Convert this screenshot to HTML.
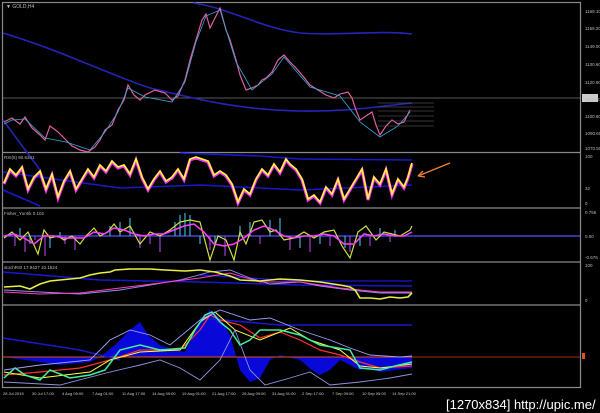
<!DOCTYPE html>
<html><head><meta charset="utf-8"><style>
html,body{margin:0;padding:0;background:#000;width:600px;height:413px;overflow:hidden}
svg{display:block}
text{font-family:"Liberation Sans",sans-serif}
</style></head><body>
<svg width="600" height="413" viewBox="0 0 600 413" xmlns="http://www.w3.org/2000/svg">
<rect width="600" height="413" fill="#000"/>
<!-- frame -->
<g stroke="#8a8a8a" stroke-width="1.2" fill="none">
<rect x="2.5" y="2.5" width="578" height="385"/>
<line x1="2" y1="152.5" x2="581" y2="152.5"/>
<line x1="2" y1="208" x2="581" y2="208"/>
<line x1="2" y1="262" x2="581" y2="262"/>
<line x1="2" y1="305" x2="581" y2="305"/>
</g>
<line x1="3" y1="98" x2="580" y2="98" stroke="#777" stroke-width="0.8"/>
<!-- main chart blue bands -->
<g fill="none" stroke="#2424b8" stroke-width="1.6">
<path d="M193,3 C230,8 260,28 300,33 C340,36 380,30 412,34"/>
<path d="M3,33 C60,50 110,75 150,88 C200,100 240,110 300,111 C350,112 380,106 412,103"/>
<path d="M3,120 L40,170"/>
</g>
<!-- candles approx line -->
<g fill="none" stroke-width="1.2">
<path d="M4,122 L12,118 L20,124 L25,117 L32,128 L40,135 L45,140 L50,126 L58,132 L66,140 L72,146 L80,150 L88,152 L95,147 L100,140 L105,130 L112,125 L118,110 L124,100 L128,85 L134,95 L140,100 L145,95 L155,90 L165,93 L172,100 L178,96 L185,80 L190,60 L196,40 L202,20 L206,14 L210,28 L214,20 L220,8 L226,30 L230,40 L236,60 L240,75 L246,90 L252,88 L258,85 L262,80 L266,78 L272,72 L278,60 L284,55 L290,62 L296,68 L302,75 L310,85 L318,90 L326,95 L334,98 L340,94 L348,92 L352,98 L356,110 L360,120 L366,116 L372,112 L376,125 L380,135 L386,126 L392,120 L398,124 L404,122 L410,110" stroke="#e060a0"/>
<path d="M4,124 L12,120 L25,119 L45,138 L66,142 L90,150 L105,132 L118,112 L128,88 L145,97 L172,102 L185,82 L196,42 L206,16 L220,10 L236,62 L252,90 L272,74 L284,57 L310,87 L340,96 L360,122 L380,137 L398,126 L410,112" stroke="#3aa6d8" stroke-width="0.8"/>
</g>
<g stroke="#666" stroke-width="0.6">
<line x1="378" y1="103" x2="434" y2="103"/><line x1="378" y1="107" x2="434" y2="107"/><line x1="378" y1="111" x2="434" y2="111"/><line x1="378" y1="116" x2="434" y2="116"/><line x1="378" y1="121" x2="434" y2="121"/><line x1="378" y1="126" x2="434" y2="126"/>
</g>
<rect x="582" y="94" width="16" height="8" fill="#ccc"/>
<g font-size="4.5" fill="#bbb">
<text x="585" y="13">1169.10</text><text x="585" y="30">1159.20</text><text x="585" y="48">1149.00</text><text x="585" y="66">1130.60</text><text x="585" y="84">1120.90</text><text x="585" y="101">1110.70</text><text x="585" y="118">1100.80</text><text x="585" y="135">1090.60</text><text x="585" y="150">1070.50</text>
<text x="585" y="158">100</text><text x="585" y="190">32</text><text x="585" y="205">0</text>
<text x="585" y="214">0.756</text><text x="585" y="238">0.00</text><text x="585" y="259">-0.676</text>
<text x="585" y="267">100</text><text x="585" y="302">0</text>
<text x="6" y="8" font-size="5">▼ GOLD,H4</text>
<text x="4" y="159">RSI(5) 90.6341</text>
<text x="4" y="215">Fisher_Yur4ik 0.102</text>
<text x="4" y="269">stochRSI 17.9427 10.1524</text>
</g>
<!-- RSI panel -->
<g fill="none">
<path d="M3,172 L120,188 L200,185 L300,190 L412,185" stroke="#1818d0" stroke-width="1.5"/>
<path d="M180,153 L260,156 L300,159 L412,160" stroke="#1818d0" stroke-width="1.5"/>
<path d="M3,190 L40,206" stroke="#1818d0" stroke-width="1.5"/>
<path d="M4,184 L10,170 L16,176 L22,168 L28,190 L34,178 L40,172 L46,190 L52,175 L58,198 L64,182 L70,172 L76,190 L82,180 L88,170 L94,178 L100,166 L106,172 L112,162 L118,168 L124,166 L130,175 L136,160 L142,178 L148,190 L154,180 L160,172 L166,182 L172,178 L178,170 L184,180 L190,160 L196,158 L202,160 L208,162 L214,176 L220,172 L226,176 L232,185 L238,203 L244,190 L250,195 L256,180 L262,170 L268,176 L274,165 L280,173 L286,160 L290,165 L296,170 L302,180 L308,200 L314,196 L320,203 L326,188 L332,195 L338,180 L344,200 L350,190 L356,180 L362,170 L368,200 L374,178 L380,185 L386,170 L392,195 L398,180 L404,188 L408,178 L412,164" stroke="#ff30ff" stroke-width="3"/>
<path d="M4,183 L10,169 L16,175 L22,167 L28,189 L34,177 L40,171 L46,189 L52,174 L58,197 L64,181 L70,171 L76,189 L82,179 L88,169 L94,177 L100,165 L106,171 L112,161 L118,167 L124,165 L130,174 L136,159 L142,177 L148,189 L154,179 L160,171 L166,181 L172,177 L178,169 L184,179 L190,159 L196,157 L202,159 L208,161 L214,175 L220,171 L226,175 L232,184 L238,202 L244,189 L250,194 L256,179 L262,169 L268,175 L274,164 L280,172 L286,159 L290,164 L296,169 L302,179 L308,199 L314,195 L320,202 L326,187 L332,194 L338,179 L344,199 L350,189 L356,179 L362,169 L368,199 L374,177 L380,184 L386,169 L392,194 L398,179 L404,187 L408,177 L412,163" stroke="#ffff30" stroke-width="1.6"/>
</g>
<line x1="418" y1="176" x2="450" y2="163" stroke="#f08030" stroke-width="1.3"/>
<path d="M418,176 l5,-5 M418,176 l7,1" stroke="#f08030" stroke-width="1.3"/>
<!-- Fisher -->
<line x1="3" y1="236" x2="580" y2="236" stroke="#5050ff" stroke-width="1.2"/>
<g stroke-width="1.2">
<path d="M20,236V228M30,236V244M50,236V248M60,236V232M110,236V226M120,236V222M130,236V218M175,236V222M180,236V215M185,236V213M190,236V215M200,236V244M215,236V246M240,236V226M250,236V222M270,236V220M280,236V218M300,236V248M320,236V244M345,236V248M360,236V246M380,236V228M395,236V230" stroke="#3ab0d8"/>
<path d="M15,236V246M25,236V252M35,236V240M45,236V256M65,236V244M75,236V250M140,236V248M150,236V244M160,236V252M210,236V250M225,236V256M260,236V244M290,236V250M310,236V252M330,236V246M350,236V252M370,236V246M390,236V242" stroke="#a040d0"/>
</g>
<g fill="none">
<path d="M4,238 L12,232 L20,240 L28,232 L38,254 L44,230 L50,238 L58,236 L64,240 L72,236 L80,244 L86,236 L94,228 L100,236 L108,232 L114,224 L120,232 L130,226 L140,244 L150,232 L160,236 L170,230 L180,222 L190,220 L200,222 L210,260 L218,236 L226,240 L234,260 L240,232 L246,244 L254,222 L262,220 L270,232 L276,230 L284,240 L294,238 L304,232 L314,238 L324,232 L334,230 L342,246 L350,258 L358,232 L366,226 L376,240 L384,232 L392,234 L400,236 L410,230 L412,226" stroke="#d0e040" stroke-width="1.2"/>
<path d="M4,236 L14,234 L24,238 L34,244 L44,236 L54,236 L64,238 L74,238 L84,238 L94,232 L104,234 L114,228 L124,230 L134,234 L144,236 L154,234 L164,234 L174,230 L184,226 L194,224 L204,232 L214,244 L224,246 L234,244 L244,238 L254,230 L264,226 L274,230 L284,236 L294,238 L304,236 L314,236 L324,234 L334,236 L344,244 L354,244 L364,234 L374,236 L384,234 L394,236 L404,236 L412,232" stroke="#ff40ff" stroke-width="1.5"/>
</g>
<!-- stochRSI -->
<g fill="none">
<path d="M3,272 L100,280 L200,282 L300,285 L412,286" stroke="#1818d0" stroke-width="1.5"/>
<path d="M200,275 L300,281 L412,281" stroke="#1818d0" stroke-width="1.3"/>
<path d="M4,290 L40,292 L80,294 L120,290 L150,285 L180,280 L210,272 L230,270 L250,278 L270,284 L300,282 L320,286 L350,290 L380,293 L412,293" stroke="#9090f0" stroke-width="0.9"/>
<path d="M4,292 L40,294 L80,293 L120,288 L160,283 L200,278 L230,273 L260,282 L300,282 L340,288 L380,292 L412,292" stroke="#ff40c0" stroke-width="1"/>
<path d="M4,287 L20,286 L30,289 L40,284 L50,281 L60,280 L70,279 L80,278 L90,275 L100,273 L110,272 L115,270 L130,269 L150,269 L165,270 L185,271 L200,270 L215,272 L230,276 L240,280 L260,281 L280,279 L300,280 L320,282 L340,285 L350,287 L355,290 L360,298 L370,298 L380,299 L390,297 L400,298 L408,297 L412,293" stroke="#e8f040" stroke-width="1.6"/>
</g>
<!-- bottom panel -->
<path d="M3,357 L100,357 L115,345 L130,330 L140,322 L148,335 L160,345 L175,350 L185,352 L200,322 L210,310 L220,318 L230,335 L240,370 L250,382 L260,378 L270,360 L280,355 L300,360 L312,370 L320,375 L330,370 L340,360 L350,365 L360,370 L370,368 L380,372 L395,370 L412,368 L412,357 L3,357 Z" fill="#0808d8"/>
<path d="M3,357 L40,362 L60,365 L90,362 L100,357 Z" fill="#0808d8"/>
<line x1="3" y1="357" x2="412" y2="357" stroke="#e05020" stroke-width="0.9"/>
<line x1="412" y1="357" x2="580" y2="357" stroke="#a03010" stroke-width="0.9"/>
<rect x="582" y="353" width="3" height="6" fill="#e05020"/>
<g fill="none">
<path d="M3,338 L80,350 L120,360 M200,318 L280,325 L350,325 L412,325" stroke="#1818d0" stroke-width="1.5"/>
<path d="M4,375 L40,372 L80,368 L110,360 L140,350 L180,350 L200,330 L210,315 L220,320 L240,325 L260,338 L280,332 L300,340 L320,350 L340,355 L360,362 L380,368 L412,366" stroke="#ff3030" stroke-width="1.2"/>
<path d="M4,372 L40,378 L90,372 L110,360 L140,352 L180,350 L200,322 L215,312 L235,330 L260,340 L290,328 L310,340 L340,350 L360,366 L380,368 L412,364" stroke="#ffff40" stroke-width="1"/>
<path d="M4,378 L15,368 L25,375 L40,380 L50,370 L70,378 L90,375 L105,370 L120,350 L140,345 L160,350 L185,348 L195,330 L205,315 L212,312 L220,322 L230,330 L240,345 L250,340 L260,330 L280,330 L300,335 L320,345 L350,350 L360,368 L380,370 L395,366 L412,362" stroke="#40f0a0" stroke-width="1.5"/>
<path d="M4,370 L40,365 L90,360 L110,340 L130,330 L150,335 L170,345 L200,320 L220,310 L250,320 L270,318 L300,330 L330,340 L350,348 L370,355 L400,357 L412,356" stroke="#a0a0ff" stroke-width="0.9"/>
<path d="M4,382 L60,385 L110,372 L140,365 L160,360 L180,368 L200,380 L220,360 L235,330 L250,370 L265,385 L290,378 L310,372 L330,385 L360,382 L390,378 L412,374" stroke="#9090e0" stroke-width="0.9"/>
</g>
<g font-size="4" fill="#ccc">
<text x="3" y="395">28 Jul 2015</text><text x="32" y="395">30 Jul 17:00</text><text x="62" y="395">4 Aug 09:00</text><text x="92" y="395">7 Aug 01:00</text><text x="122" y="395">11 Aug 17:00</text><text x="152" y="395">14 Aug 09:00</text><text x="182" y="395">19 Aug 01:00</text><text x="212" y="395">21 Aug 17:00</text><text x="242" y="395">26 Aug 09:00</text><text x="272" y="395">31 Aug 01:00</text><text x="302" y="395">2 Sep 17:00</text><text x="332" y="395">7 Sep 09:00</text><text x="362" y="395">10 Sep 05:00</text><text x="392" y="395">14 Sep 21:00</text>
</g>
<text x="446" y="409" font-size="13" fill="#fff">[1270x834] http://upic.me/</text>
</svg>
</body></html>
